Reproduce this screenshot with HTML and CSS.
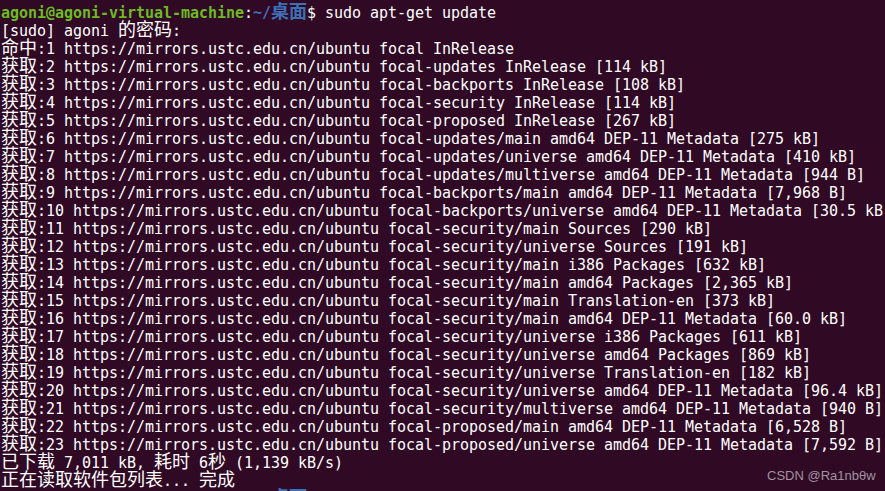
FILE: index.html
```html
<!DOCTYPE html>
<html lang="zh-CN">
<head>
<meta charset="utf-8">
<title>Terminal</title>
<link rel="stylesheet" href="styles.css">
</head>
<body>
<div class="term">
<div class="ln"><span class="user">agoni@agoni-virtual-machine</span>:<span class="path">~/<span class="cj">桌面</span></span>$ sudo apt-get update</div>
<div class="ln">[sudo] agoni <span class="cj">的密码</span>:</div>
<div class="ln"><span class="cj">命中</span>:1 https://mirrors.ustc.edu.cn/ubuntu focal InRelease</div>
<div class="ln"><span class="cj">获取</span>:2 https://mirrors.ustc.edu.cn/ubuntu focal-updates InRelease [114 kB]</div>
<div class="ln"><span class="cj">获取</span>:3 https://mirrors.ustc.edu.cn/ubuntu focal-backports InRelease [108 kB]</div>
<div class="ln"><span class="cj">获取</span>:4 https://mirrors.ustc.edu.cn/ubuntu focal-security InRelease [114 kB]</div>
<div class="ln"><span class="cj">获取</span>:5 https://mirrors.ustc.edu.cn/ubuntu focal-proposed InRelease [267 kB]</div>
<div class="ln"><span class="cj">获取</span>:6 https://mirrors.ustc.edu.cn/ubuntu focal-updates/main amd64 DEP-11 Metadata [275 kB]</div>
<div class="ln"><span class="cj">获取</span>:7 https://mirrors.ustc.edu.cn/ubuntu focal-updates/universe amd64 DEP-11 Metadata [410 kB]</div>
<div class="ln"><span class="cj">获取</span>:8 https://mirrors.ustc.edu.cn/ubuntu focal-updates/multiverse amd64 DEP-11 Metadata [944 B]</div>
<div class="ln"><span class="cj">获取</span>:9 https://mirrors.ustc.edu.cn/ubuntu focal-backports/main amd64 DEP-11 Metadata [7,968 B]</div>
<div class="ln"><span class="cj">获取</span>:10 https://mirrors.ustc.edu.cn/ubuntu focal-backports/universe amd64 DEP-11 Metadata [30.5 kB]</div>
<div class="ln"><span class="cj">获取</span>:11 https://mirrors.ustc.edu.cn/ubuntu focal-security/main Sources [290 kB]</div>
<div class="ln"><span class="cj">获取</span>:12 https://mirrors.ustc.edu.cn/ubuntu focal-security/universe Sources [191 kB]</div>
<div class="ln"><span class="cj">获取</span>:13 https://mirrors.ustc.edu.cn/ubuntu focal-security/main i386 Packages [632 kB]</div>
<div class="ln"><span class="cj">获取</span>:14 https://mirrors.ustc.edu.cn/ubuntu focal-security/main amd64 Packages [2,365 kB]</div>
<div class="ln"><span class="cj">获取</span>:15 https://mirrors.ustc.edu.cn/ubuntu focal-security/main Translation-en [373 kB]</div>
<div class="ln"><span class="cj">获取</span>:16 https://mirrors.ustc.edu.cn/ubuntu focal-security/main amd64 DEP-11 Metadata [60.0 kB]</div>
<div class="ln"><span class="cj">获取</span>:17 https://mirrors.ustc.edu.cn/ubuntu focal-security/universe i386 Packages [611 kB]</div>
<div class="ln"><span class="cj">获取</span>:18 https://mirrors.ustc.edu.cn/ubuntu focal-security/universe amd64 Packages [869 kB]</div>
<div class="ln"><span class="cj">获取</span>:19 https://mirrors.ustc.edu.cn/ubuntu focal-security/universe Translation-en [182 kB]</div>
<div class="ln"><span class="cj">获取</span>:20 https://mirrors.ustc.edu.cn/ubuntu focal-security/universe amd64 DEP-11 Metadata [96.4 kB]</div>
<div class="ln"><span class="cj">获取</span>:21 https://mirrors.ustc.edu.cn/ubuntu focal-security/multiverse amd64 DEP-11 Metadata [940 B]</div>
<div class="ln"><span class="cj">获取</span>:22 https://mirrors.ustc.edu.cn/ubuntu focal-proposed/main amd64 DEP-11 Metadata [6,528 B]</div>
<div class="ln"><span class="cj">获取</span>:23 https://mirrors.ustc.edu.cn/ubuntu focal-proposed/universe amd64 DEP-11 Metadata [7,592 B]</div>
<div class="ln"><span class="cj">已下载</span> 7,011 kB, <span class="cj">耗时</span> 6<span class="cj">秒</span> (1,139 kB/s)</div>
<div class="ln"><span class="cj">正在读取软件包列表</span>... <span class="cj">完成</span></div>
<div class="ln"><span class="user">agoni@agoni-virtual-machine</span>:<span class="path">~/<span class="cj">桌面</span></span>$ </div>
</div>
<div class="mark">CSDN @Ra1nbθw</div>
</body>
</html>
```

FILE: styles.css
```css
html, body {
  margin: 0;
  padding: 0;
  background: #300a24;
}

body {
  position: relative;
  width: 885px;
  height: 491px;
  overflow: hidden;
}

.term {
  font-family: "DejaVu Sans Mono", "Liberation Mono", monospace;
  font-size: 15px;
  line-height: 18px;
  letter-spacing: -0.03px;
  color: #ffffff;
  padding: 4px 0 0 1px;
  height: 487px;
  overflow: hidden;
}

.ln {
  height: 18px;
  white-space: pre;
}

.cj {
  font-family: "Noto Sans CJK SC", "Noto Sans CJK JP", sans-serif;
  font-size: 18px;
  line-height: 0;
  letter-spacing: 0;
}

.user {
  color: #6cbb22;
  font-weight: bold;
}

.path {
  color: #3e70b6;
  font-weight: bold;
}

.mark {
  position: absolute;
  left: 767px;
  top: 468px;
  font-family: "Liberation Sans", Arial, sans-serif;
  font-size: 13px;
  color: #a093a0;
  white-space: nowrap;
}
```
